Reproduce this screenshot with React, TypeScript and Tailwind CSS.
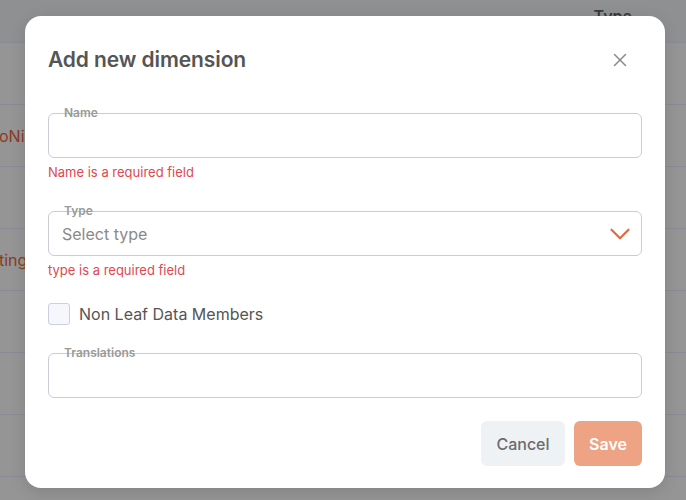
import { X, ChevronDown } from 'lucide-react';

const rows = ['', 'oNinja', '', 'ting', '', '', '', ''];

const Field = ({ label, children }: { label: string; children?: React.ReactNode }) => (
  <div className="relative h-[45px] rounded-md border border-[#cbcbd6] bg-white flex items-center px-[13px]">
    <span className="absolute left-[15px] -top-[8px] text-[12px] leading-[14px] font-semibold text-[#9a9a9a]">
      {label}
    </span>
    {children}
  </div>
);

export default function App() {
  return (
    <div className="relative w-[686px] h-[500px] overflow-hidden bg-[#959595] font-['Inter',sans-serif]">
      {/* page behind the overlay */}
      <div className="h-[43px] bg-[#8f9091] border-b border-[#8a8a96] flex justify-end pr-[54px]">
        <span className="text-[16px] font-semibold text-[#3a3a3a] pt-[4px]">Type</span>
      </div>
      {rows.map((r, i) => (
        <div key={i} className="h-[62px] border-b border-[#8a8a96] flex items-center">
          <span className="-ml-[1px] text-[16px] text-[#8c3a24]">{r}</span>
        </div>
      ))}

      {/* modal */}
      <div className="absolute left-[25px] top-[16px] w-[640px] h-[472px] rounded-2xl bg-white shadow-[0_4px_16px_rgba(0,0,0,0.12)] px-[23px] pt-[24px]">
        <div className="h-10 flex items-center justify-between">
          <h2 className="text-[21px] font-semibold tracking-[-0.1px] text-[#555555]">Add new dimension</h2>
          <X className="w-[22px] h-[22px] text-[#8a8a8a] mr-[11px]" strokeWidth={1.6} />
        </div>

        <div className="mt-[33px]">
          <Field label="Name" />
        </div>
        <p className="mt-[5px] text-[13px] leading-[18px] text-[#e0484f]">Name is a required field</p>

        <div className="mt-[30px]">
          <Field label="Type">
            <span className="flex-1 text-[16px] text-[#8a8a8a]">Select type</span>
            <ChevronDown className="w-[34px] h-[34px] text-[#e4683a] -mr-[9px]" strokeWidth={1.5} />
          </Field>
        </div>
        <p className="mt-[5px] text-[13px] leading-[18px] text-[#e0484f]">type is a required field</p>

        <label className="mt-[24px] flex items-center gap-[9px]">
          <span className="w-[22px] h-[22px] rounded-[3px] border border-[#cdd0dc] bg-[#f6f7fc]" />
          <span className="text-[16px] leading-[22px] text-[#555555]">Non Leaf Data Members</span>
        </label>

        <div className="mt-[28px]">
          <Field label="Translations" />
        </div>

        <div className="mt-[23px] flex justify-end gap-[9px]">
          <button className="h-[45px] w-[84px] rounded-md bg-[#eff2f5] text-[16px] font-medium text-[#6c6c6c]">
            Cancel
          </button>
          <button className="h-[45px] w-[68px] rounded-md bg-[#eda384] text-[16px] font-semibold text-white">
            Save
          </button>
        </div>
      </div>
    </div>
  );
}
